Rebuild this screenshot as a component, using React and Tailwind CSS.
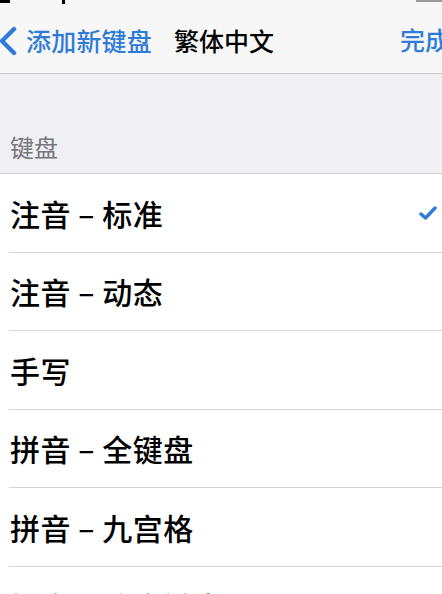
export default function App() {
  const rows = [
    { t: "注音 – 标准", check: true },
    { t: "注音 – 动态" },
    { t: "手写" },
    { t: "拼音 – 全键盘" },
    { t: "拼音 – 九宫格" },
    { t: "拼音 – 注音键盘" },
  ];
  return (
    <div
      className="w-[442px] h-[594px] overflow-hidden bg-[#efeff4] relative"
      style={{ fontFamily: '"Noto Sans CJK SC", "Noto Sans", sans-serif' }}
    >
      <div className="h-[74px] bg-[#f7f7f8] border-b border-[#c9c9cc] relative flex items-center">
        <div className="absolute left-0 top-0 w-[10px] h-[3px] bg-black" />
        <div className="absolute left-[62px] top-0 w-[3px] h-[4px] bg-black" />
        <div className="absolute right-0 top-0 w-[26px] h-[2px] bg-[#999]" />
        <div className="flex items-center pt-[8px]">
          <svg width="22" height="32" viewBox="0 0 22 32" className="ml-[-3px]">
            <path d="M17 4 L5 16 L17 28" fill="none" stroke="#2f7bd8" strokeWidth="4.4" strokeLinecap="round" strokeLinejoin="round" />
          </svg>
          <span className="ml-[7px] text-[25px] leading-none text-[#2f7bd8] font-medium tracking-[0.2px]">添加新键盘</span>
          <span className="ml-[22px] text-[25px] leading-none text-black font-medium tracking-[0px]">繁体中文</span>
        </div>
        <span className="absolute left-[400px] top-[27px] text-[25px] leading-none text-[#2f7bd8] font-medium whitespace-nowrap">完成</span>
      </div>
      <div className="h-[99px] flex items-end pl-[10px] pb-[14px]">
        <span className="text-[24px] leading-none text-[#76767b]">键盘</span>
      </div>
      <div className="bg-white border-t border-[#cfcfd2]">
        {rows.map((r, i) => (
          <div key={i} className="pl-[9px]">
            <div className={"h-[78.5px] flex items-center justify-between pr-[5px] " + (i < rows.length - 1 ? "border-b border-[#d4d4d7]" : "")}>
              <span className="pl-[1px] text-[30px] leading-none text-black font-medium tracking-[0.5px]">{r.t}</span>
              {r.check ? (
                <svg width="18" height="14" viewBox="0 0 18 14">
                  <path d="M2 8 L6.5 12 L16 2" fill="none" stroke="#2f7bd8" strokeWidth="3.4" strokeLinecap="round" strokeLinejoin="round" />
                </svg>
              ) : i === rows.length - 1 ? (
                <span className="text-[24px] leading-none text-[#c0c0c4] mr-[8px]">繁体中文</span>
              ) : null}
            </div>
          </div>
        ))}
      </div>
    </div>
  );
}
